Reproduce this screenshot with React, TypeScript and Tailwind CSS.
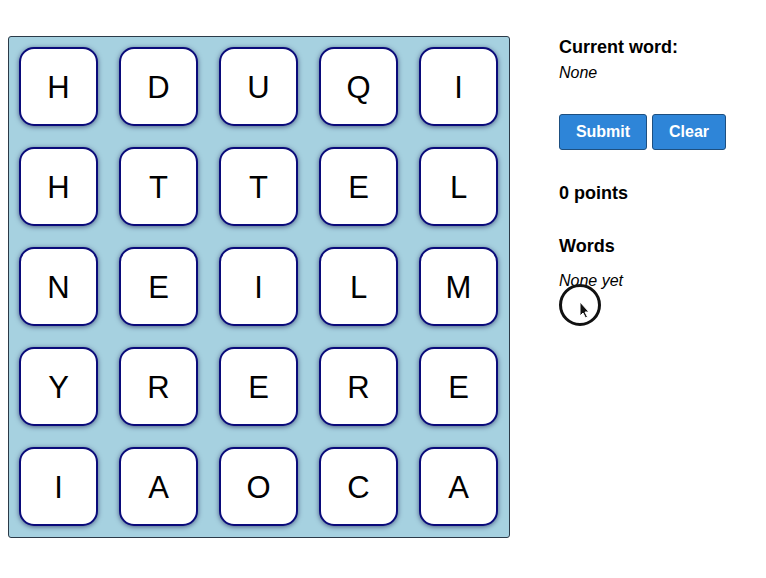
import React from "react";

const board = [
  ["H", "D", "U", "Q", "I"],
  ["H", "T", "T", "E", "L"],
  ["N", "E", "I", "L", "M"],
  ["Y", "R", "E", "R", "E"],
  ["I", "A", "O", "C", "A"],
];

export default function App() {
  return (
    <div
      className="relative w-[766px] h-[578px] bg-white flex gap-[49px] pl-[8px] pt-[36px]"
      style={{ fontFamily: '"Liberation Sans", Arial, sans-serif' }}
    >
      <div className="w-[502px] h-[502px] bg-[#a6d1e0] border-[1.5px] border-[#2b3a48] rounded-[3px] p-[10px] grid grid-cols-[repeat(5,79px)] grid-rows-[repeat(5,79px)] gap-[21px]">
        {board.flat().map((l, i) => (
          <div
            key={i}
            className="w-[79px] h-[79px] bg-white border-2 border-[#0a0a7a] rounded-[15px] shadow-[0_1px_5px_rgba(0,0,60,0.55)] flex items-center justify-center pt-[4px] text-[31px] text-black"
          >
            {l}
          </div>
        ))}
      </div>

      <div className="flex flex-col text-black">
        <div className="text-[18px] font-bold leading-[20px] mt-[1px]">Current word:</div>
        <div className="text-[16px] italic leading-[18px] mt-[7px]">None</div>
        <div className="flex gap-[5px] mt-[32px]">
          <button className="h-[36px] w-[88px] bg-[#2e85d8] border border-[#1d4f80] rounded-[3px] text-white font-bold text-[16px]">
            Submit
          </button>
          <button className="h-[36px] w-[74px] bg-[#2e85d8] border border-[#1d4f80] rounded-[3px] text-white font-bold text-[16px]">
            Clear
          </button>
        </div>
        <div className="text-[18px] font-bold leading-[20px] mt-[33px]">0 points</div>
        <div className="text-[18px] font-bold leading-[20px] mt-[33px]">Words</div>
        <div className="text-[16px] italic leading-[18px] mt-[16px]">None yet</div>
      </div>

      <svg className="absolute left-[558px] top-[283px]" width="46" height="46" viewBox="0 0 46 46">
        <circle cx="22" cy="22" r="19.5" fill="none" stroke="#111" strokeWidth="3" />
        <path d="M22 19 L22 33 L25 30 L27.5 35 L29.5 34 L27 29 L31 29 Z" fill="#111" stroke="#fff" strokeWidth="1" />
      </svg>
    </div>
  );
}
